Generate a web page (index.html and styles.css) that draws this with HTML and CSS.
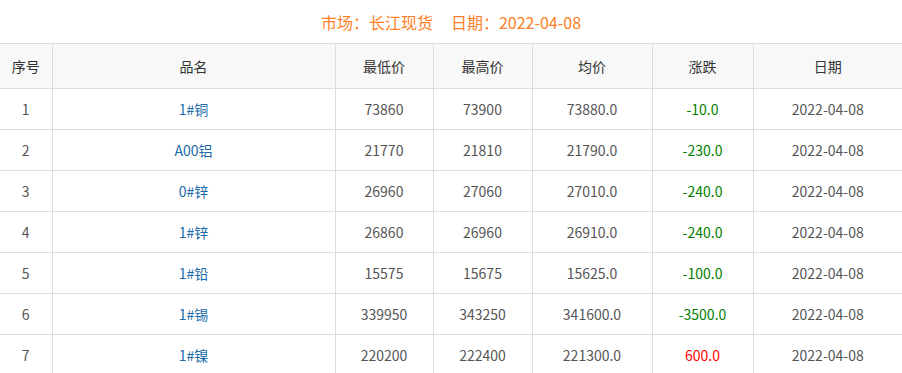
FILE: index.html
```html
<!DOCTYPE html>
<html lang="zh-CN">
<head>
<meta charset="utf-8">
<title>长江现货</title>
<link rel="stylesheet" href="styles.css">
</head>
<body>
<div class="page">
  <h2 class="title"><span>市场：长江现货</span><span class="date">日期：2022-04-08</span></h2>
  <table class="prices">
    <colgroup>
      <col class="c1"><col class="c2"><col class="c3"><col class="c4"><col class="c5"><col class="c6"><col class="c7">
    </colgroup>
    <thead>
      <tr><th>序号</th><th>品名</th><th>最低价</th><th>最高价</th><th>均价</th><th>涨跌</th><th>日期</th></tr>
    </thead>
    <tbody>
      <tr><td>1</td><td class="name">1#铜</td><td>73860</td><td>73900</td><td>73880.0</td><td class="down">-10.0</td><td>2022-04-08</td></tr>
      <tr><td>2</td><td class="name">A00铝</td><td>21770</td><td>21810</td><td>21790.0</td><td class="down">-230.0</td><td>2022-04-08</td></tr>
      <tr><td>3</td><td class="name">0#锌</td><td>26960</td><td>27060</td><td>27010.0</td><td class="down">-240.0</td><td>2022-04-08</td></tr>
      <tr><td>4</td><td class="name">1#锌</td><td>26860</td><td>26960</td><td>26910.0</td><td class="down">-240.0</td><td>2022-04-08</td></tr>
      <tr><td>5</td><td class="name">1#铅</td><td>15575</td><td>15675</td><td>15625.0</td><td class="down">-100.0</td><td>2022-04-08</td></tr>
      <tr><td>6</td><td class="name">1#锡</td><td>339950</td><td>343250</td><td>341600.0</td><td class="down">-3500.0</td><td>2022-04-08</td></tr>
      <tr><td>7</td><td class="name">1#镍</td><td>220200</td><td>222400</td><td>221300.0</td><td class="up">600.0</td><td>2022-04-08</td></tr>
    </tbody>
  </table>
</div>
</body>
</html>
```
FILE: styles.css
```css
html, body {
  margin: 0;
  padding: 0;
  background: #fff;
}
body {
  font-family: "Microsoft YaHei", "Noto Sans CJK SC", "Noto Sans", sans-serif;
  color: #444;
  font-size: 14px;
}
.page {
  width: 902px;
}
.title {
  margin: 0;
  height: 43px;
  line-height: 44px;
  text-align: center;
  font-size: 16px;
  font-weight: normal;
  color: #ff7f27;
}
.title .date {
  margin-left: 18px;
}
.prices {
  width: 902px;
  border-collapse: collapse;
  table-layout: fixed;
}
.c1 { width: 52px; }
.c2 { width: 283px; }
.c3 { width: 98px; }
.c4 { width: 99px; }
.c5 { width: 120px; }
.c6 { width: 101px; }
.c7 { width: 149px; }
.prices th,
.prices td {
  border: 1px solid #dddddd;
  text-align: center;
  padding: 0;
  font-weight: normal;
}
.prices tr > :first-child { border-left: none; }
.prices tr > :last-child { border-right: none; }
.prices th {
  height: 44px;
  background: #f8f8f8;
  color: #333;
}
.prices td {
  height: 40px;
  color: #555;
}
.prices td.name { color: #1c6aa8; }
.prices td.down { color: #008000; }
.prices td.up { color: #ff0000; }
```
